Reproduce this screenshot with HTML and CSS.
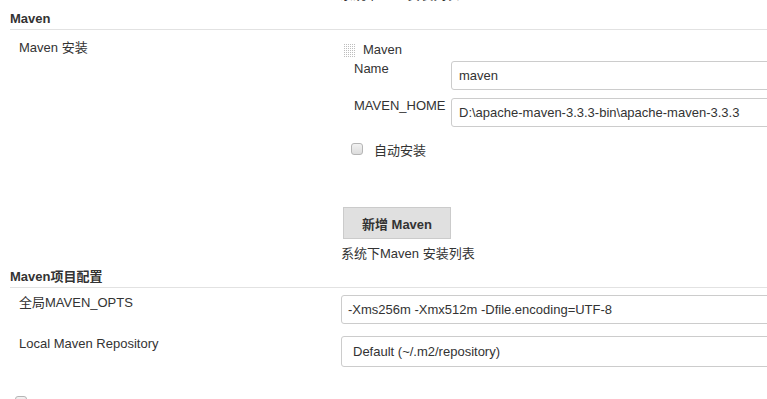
FILE: index.html
```html
<!DOCTYPE html>
<html lang="zh-CN">

<head>
    <meta charset="UTF-8">
    <title>Global Tool Configuration - Maven</title>
    <link rel="stylesheet" href="styles.css">
</head>

<body>
    <div class="page">
        <!-- tail of the previous section, cut at the top -->
        <div class="help cut-help">系统下JDK 安装列表</div>

        <div class="section-header">Maven</div>
        <div class="row">
            <div class="row-label">Maven 安装</div>
            <div class="row-setting">
                <div class="chunk">
                    <div class="chunk-title">
                        <svg class="handle" width="11" height="13" viewBox="0 0 11 13">
                            <defs>
                                <pattern id="dots" width="2" height="2" patternUnits="userSpaceOnUse">
                                    <rect width="1" height="1" fill="#bdbdbd"/>
                                </pattern>
                            </defs>
                            <rect width="11" height="13" fill="url(#dots)"/>
                        </svg>Maven
                    </div>
                    <div class="field">
                        <label class="field-label">Name</label>
                        <input class="text-input" type="text" value="maven">
                    </div>
                    <div class="field">
                        <label class="field-label">MAVEN_HOME</label>
                        <input class="text-input" type="text" value="D:\apache-maven-3.3.3-bin\apache-maven-3.3.3">
                    </div>
                    <label class="check chunk-check"><input class="checkbox" type="checkbox">自动安装</label>
                </div>
                <button class="add-button">新增 Maven</button>
                <div class="help">系统下Maven 安装列表</div>
            </div>
        </div>

        <div class="section-header section-header-2">Maven项目配置</div>
        <div class="row row-opts">
            <div class="row-label">全局MAVEN_OPTS</div>
            <div class="row-setting">
                <input class="text-input opts-input" type="text" value="-Xms256m -Xmx512m -Dfile.encoding=UTF-8">
            </div>
        </div>
        <div class="row row-repo">
            <div class="row-label">Local Maven Repository</div>
            <div class="row-setting">
                <select class="select-input">
                    <option>Default (~/.m2/repository)</option>
                </select>
            </div>
        </div>

        <label class="check bottom-check"><input class="checkbox" type="checkbox"></label>
    </div>
</body>

</html>
```

FILE: styles.css
```css
/* Base Styles */
html, body {
    margin: 0;
    padding: 0;
    overflow: hidden;
    background-color: #fff;
}

body {
    font-family: "Liberation Sans", Arial, "Noto Sans CJK SC", sans-serif;
    font-size: 13px;
    line-height: 15px;
    color: #333;
}

.page {
    width: 1000px;
    padding-left: 10px;
}

.help {
    line-height: 15px;
}

.cut-help {
    height: 15px;
    margin-top: -13px;
    margin-left: 330px;
}

.section-header {
    font-weight: bold;
    padding: 9px 0 3px;
    border-bottom: 1px solid #e2e2e2;
}

.section-header-2 {
    padding-top: 8px;
}

/* Rows */
.row {
    display: grid;
    grid-template-columns: 331px 1fr;
    padding-top: 10px;
}

.row-label {
    padding-left: 9px;
}

.row-setting {
    display: flex;
    flex-direction: column;
    align-items: flex-start;
}

.row-opts {
    padding-top: 7px;
}

.row-repo {
    padding-top: 12px;
}

/* Repeated chunk */
.chunk {
    width: 100%;
}

.chunk-title {
    display: flex;
    align-items: center;
    padding-top: 2px;
}

.handle {
    display: block;
    margin: 1px 8px 0 3px;
}

.field {
    display: flex;
    align-items: flex-start;
    margin-top: 8px;
}

.chunk-title + .field {
    margin-top: 4px;
}

.field-label {
    width: 110px;
    padding-left: 13px;
    box-sizing: border-box;
    flex-shrink: 0;
    white-space: nowrap;
}

.text-input {
    width: 100%;
    height: 29px;
    box-sizing: border-box;
    padding: 0 7px;
    margin: 0;
    border: 1px solid #ccc;
    border-radius: 3px;
    font-family: inherit;
    font-size: 13px;
    color: #333;
    background-color: #fff;
}

.field .text-input {
    flex: 1;
}

.opts-input {
    flex: none;
    padding-left: 6px;
}

.select-input {
    flex: none;
    width: 100%;
    height: 31px;
    box-sizing: border-box;
    padding: 0 11px;
    margin: 0;
    border: 1px solid #ccc;
    border-radius: 3px;
    font-family: inherit;
    font-size: 13px;
    color: #333;
    background-color: #fff;
    appearance: none;
    -webkit-appearance: none;
}

/* Checkbox */
.check {
    display: flex;
    align-items: flex-start;
    height: 15px;
}

.checkbox {
    appearance: none;
    -webkit-appearance: none;
    width: 12px;
    height: 12px;
    margin: 0 11px 0 0;
    border: 1px solid #b5b5b5;
    border-radius: 3px;
    background: linear-gradient(#f2f2f2, #dcdcdc);
    box-sizing: border-box;
}

.chunk-check {
    margin-top: 16px;
    padding-left: 10px;
}

.bottom-check {
    margin-top: 29px;
    padding-left: 5px;
}

/* Button */
.add-button {
    margin: 49px 0 0 2px;
    width: 108px;
    height: 32px;
    padding: 0;
    background-color: #e0e0e0;
    border: 1px solid #cbcbcb;
    font-family: inherit;
    font-size: 13px;
    font-weight: bold;
    color: #333;
}

.add-button + .help {
    margin-top: 7px;
}
```
